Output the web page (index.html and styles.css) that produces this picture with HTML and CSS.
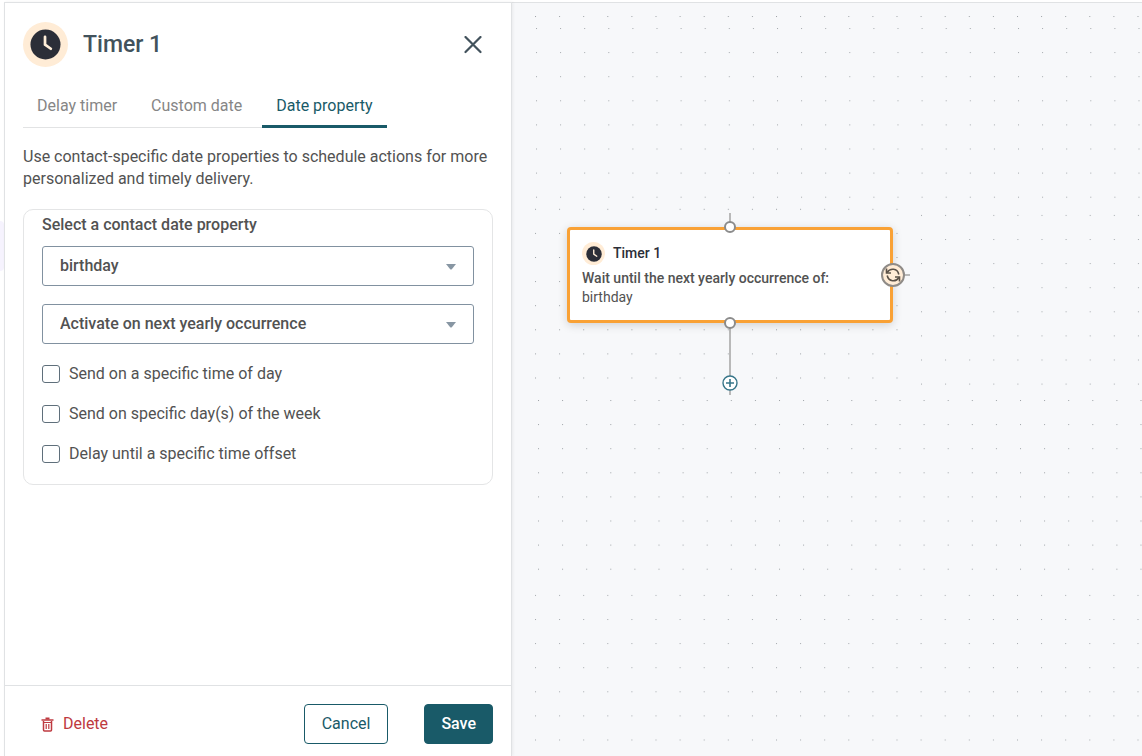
FILE: index.html
```html
<!DOCTYPE html>
<html lang="en">
<head>
<meta charset="utf-8">
<meta name="viewport" content="width=device-width, initial-scale=1">
<title>Timer 1</title>
<link rel="stylesheet" href="styles.css">
</head>
<body>
<svg class="defs" width="0" height="0" aria-hidden="true">
  <symbol id="clock" viewBox="0 0 32 32">
    <circle cx="16" cy="16" r="15.5" fill="#2b2e38"/>
    <path d="M15.5 8v8.2l6 4.2" fill="none" stroke="#ffeed9" stroke-width="2.8" stroke-linecap="round" stroke-linejoin="round"/>
  </symbol>
</svg>
<div class="app">
  <div class="gutter"><span class="gutter-tab"></span></div>
  <aside class="panel">
    <div class="panel-body">
      <header class="panel-header">
        <span class="badge"><svg class="badge-icon"><use href="#clock"/></svg></span>
        <h1 class="title">Timer 1</h1>
        <button class="close" type="button" aria-label="Close">
          <svg width="18" height="18" viewBox="0 0 18 18"><path d="M1.5 1l15 15M16.5 1l-15 15" stroke="#42525c" stroke-width="2.2" stroke-linecap="round"/></svg>
        </button>
      </header>
      <nav class="tabs" role="tablist">
        <button class="tab" type="button" role="tab">Delay timer</button>
        <button class="tab" type="button" role="tab">Custom date</button>
        <button class="tab tab-active" type="button" role="tab" aria-selected="true">Date property</button>
      </nav>
      <p class="intro">Use contact-specific date properties to schedule actions for more personalized and timely delivery.</p>
      <section class="card">
        <label class="field-label" for="property">Select a contact date property</label>
        <div class="select-wrap">
          <select class="select" id="property"><option>birthday</option></select>
          <svg class="caret" viewBox="0 0 10 6"><path d="M0 0h10L6 5Q5 6 4 5z" fill="#8796a3"/></svg>
        </div>
        <div class="select-wrap">
          <select class="select" aria-label="Activation"><option>Activate on next yearly occurrence</option></select>
          <svg class="caret" viewBox="0 0 10 6"><path d="M0 0h10L6 5Q5 6 4 5z" fill="#8796a3"/></svg>
        </div>
        <div class="checks">
          <label class="check"><input class="box" type="checkbox">Send on a specific time of day</label>
          <label class="check"><input class="box" type="checkbox">Send on specific day(s) of the week</label>
          <label class="check"><input class="box" type="checkbox">Delay until a specific time offset</label>
        </div>
      </section>
    </div>
    <footer class="panel-footer">
      <button class="delete" type="button">
        <svg width="13" height="15" viewBox="0 0 13 15" fill="none" stroke="#be3a40"><path d="M.5 3h12" stroke-width="2" stroke-opacity=".75"/><path d="M4.5 1.500h4" stroke-width="2"/><path d="M2.500 4v9q0 1 1 1h6q1 0 1-1V4" stroke-width="1.500"/><path d="M3 5.500h7" stroke-width="1"/><path d="M5.200 7v5M7.800 7v5" stroke-width="1.200"/></svg>
        Delete
      </button>
      <button class="btn btn-outline" type="button">Cancel</button>
      <button class="btn btn-solid" type="button">Save</button>
    </footer>
  </aside>
  <main class="canvas">
    <svg class="dots" aria-hidden="true">
      <defs>
        <pattern id="a" x="24" y="25" width="24.1" height="24.1" patternUnits="userSpaceOnUse"><rect width="1" height="1" fill="#a3a8ac"/></pattern>
        <pattern id="b" x="23" y="13" width="24.1" height="24.1" patternUnits="userSpaceOnUse"><rect width="1" height="1" fill="#9da2a6"/></pattern>
        <pattern id="c" x="409" y="236" width="24.1" height="24.1" patternUnits="userSpaceOnUse"><rect width="1" height="1" fill="#a3a8ac"/></pattern>
        <pattern id="d" x="26" y="397" width="24.1" height="24.1" patternUnits="userSpaceOnUse"><rect width="1" height="1" fill="#9da2a6"/></pattern>
        <pattern id="e" x="23" y="616" width="24.1" height="24.1" patternUnits="userSpaceOnUse"><rect width="1" height="1" fill="#a3a8ac"/></pattern>
      </defs>
      <rect x="10" y="0" width="100%" height="20" fill="url(#b)"/>
      <rect x="10" y="20" width="100%" height="185" fill="url(#a)"/>
      <rect x="10" y="205" width="384" height="180" fill="url(#b)"/>
      <rect x="394" y="205" width="100%" height="180" fill="url(#c)"/>
      <rect x="10" y="385" width="100%" height="195" fill="url(#d)"/>
      <rect x="10" y="580" width="100%" height="100%" fill="url(#e)"/>
    </svg>
    <div class="flow">
      <svg class="links" width="344" height="184" viewBox="0 0 344 184" aria-hidden="true">
        <path d="M163 0v14M163 110v72M325 62h18" stroke="#b9b9b9" stroke-width="2"/>
      </svg>
      <article class="node">
        <div class="node-head">
          <span class="badge badge-small"><svg class="badge-icon"><use href="#clock"/></svg></span>
          <h2 class="node-title">Timer 1</h2>
        </div>
        <p class="node-text"><strong class="node-strong">Wait until the next yearly occurrence of:</strong><br>birthday</p>
      </article>
      <span class="port port-in"></span>
      <span class="port port-out"></span>
      <span class="repeat">
        <svg width="16" height="16" viewBox="0 0 16 16" fill="none" stroke="#5a5148" stroke-width="1.6"><path d="M1.500 1.500v4.500h4.500"/><path d="M2 5.500C5 .8 12.500 1 13.800 7.500"/><path d="M14.500 14.500V10H10"/><path d="M14 10.500C11 15.200 3.500 15 2.200 8.500"/></svg>
      </span>
      <button class="add" type="button" aria-label="Add step">
        <svg width="16" height="16" viewBox="0 0 16 16" fill="none" stroke="#367589"><circle cx="8" cy="8" r="7" fill="#fff" stroke-width="1.4"/><path d="M4 8h8M8 4v8" stroke-width="1.6"/></svg>
      </button>
    </div>
  </main>
</div>
</body>
</html>
```

FILE: styles.css
```css
* { box-sizing: border-box; }

body {
  margin: 0;
  font-family: Roboto, "Liberation Sans", sans-serif;
  font-size: 16px;
  line-height: 22px;
  color: #525252;
  background: #fff;
}

button, select { font: inherit; color: inherit; }
button { padding: 0; border: 0; background: none; cursor: pointer; }
h1, h2, p { margin: 0; }
svg { display: block; }
.defs { position: absolute; }

.app {
  display: grid;
  grid-template-columns: 4px minmax(420px, 508px) minmax(0, 1fr);
  min-height: 100vh;
  padding-top: 2px;
}

.gutter { padding-top: 219px; }
.gutter-tab { display: block; height: 50px; background: #f6f3fe; border-radius: 0 4px 4px 0; }

.panel {
  position: relative;
  z-index: 1;
  display: flex;
  flex-direction: column;
  background: #fff;
  border: solid #e0e2e4;
  border-width: 1px 1px 0;
  box-shadow: 1px 0 3px rgba(0, 0, 0, .06);
}
.panel-body { flex: 1; padding: 19px 18px; }
.panel-header { display: flex; align-items: center; gap: 15px; }

.badge {
  display: flex;
  align-items: center;
  justify-content: center;
  width: 45px;
  height: 45px;
  border-radius: 50%;
  background: #ffecd6;
}
.badge-icon { width: 31px; height: 31px; }
.badge-small { width: 23px; height: 23px; }
.badge-small .badge-icon { width: 16px; height: 16px; }

.title { flex: 1; font-size: 23px; line-height: 32px; font-weight: 500; color: #42525c; }
.close { padding: 11px; }

.tabs { display: inline-flex; gap: 6px; margin-top: 16px; box-shadow: inset 0 -1px #e2e3e4; }
.tab { height: 45px; padding: 0 14px; border: solid transparent; border-width: 3px 0; color: #868686; }
.tab-active { color: #195a68; border-bottom-color: #195a68; }

.intro { margin-top: 18px; }

.card {
  margin-top: 19px;
  padding: 4px 18px 19px;
  border: 1px solid #e4e5e6;
  border-radius: 10px;
}
.field-label { display: block; font-weight: 500; }
.select-wrap { position: relative; margin-top: 18px; }
.field-label + .select-wrap { margin-top: 10px; }
.select {
  display: block;
  width: 100%;
  height: 40px;
  padding: 0 40px 0 17px;
  border: 1px solid #8191a0;
  border-radius: 3px;
  background: #fff;
  font-weight: 500;
  appearance: none;
}
.caret { position: absolute; right: 18px; top: 18px; width: 10px; height: 6px; pointer-events: none; }

.checks { display: grid; gap: 18px; margin-top: 19px; }
.check { display: flex; align-items: center; gap: 9px; }
.box {
  width: 18px;
  height: 18px;
  margin: 0;
  border: 1px solid #5f6f7b;
  border-radius: 3px;
  background: #fff;
  appearance: none;
}
.box:checked { background: #195a68; }

.panel-footer {
  display: flex;
  align-items: center;
  padding: 18px 18px 12px;
  border-top: 1px solid #e0e2e4;
}
.delete { display: flex; align-items: center; gap: 9px; margin: 0 auto 0 18px; color: #be3a40; }
.btn { height: 40px; padding: 0 17px; border: 1px solid #195a68; border-radius: 4px; color: #195a68; }
.btn-solid { margin-left: 36px; padding: 0 16px; background: #195a68; color: #fff; font-weight: 500; }

.canvas {
  position: relative;
  overflow: hidden;
  background: #f7f8fa;
  border-top: 1px solid #e0e2e4;
}
.dots { position: absolute; inset: 0; width: 100%; height: 100%; }

/* The flow sits on a free canvas, so its parts are placed by coordinate. */
.flow { position: absolute; left: 55px; top: 210px; }
.links { position: absolute; left: 0; top: 0; }
.node {
  position: absolute;
  left: 0;
  top: 14px;
  width: 326px;
  padding: 12px 12px 13px;
  border: 3px solid #f9a135;
  border-radius: 4px;
  background: #fff;
  box-shadow: 0 2px 10px rgba(0, 0, 0, .16);
  font-size: 14px;
  line-height: 19px;
}
.node-head { display: flex; align-items: center; gap: 8px; margin-bottom: 4px; }
.node-title { font-size: 14px; line-height: 19px; font-weight: 500; color: #2b2e38; }
.node-strong { font-weight: 500; }
.port {
  position: absolute;
  left: 157px;
  width: 12px;
  height: 12px;
  border: 2px solid #8b8b8b;
  border-radius: 50%;
  background: #fff;
}
.port-in { top: 8px; }
.port-out { top: 104px; }
.repeat {
  position: absolute;
  left: 314px;
  top: 50px;
  display: grid;
  place-items: center;
  width: 24px;
  height: 24px;
  border: 2px solid #8f8b87;
  border-radius: 50%;
  background: #ffecd6;
}
.add { position: absolute; left: 155px; top: 162px; }
```
